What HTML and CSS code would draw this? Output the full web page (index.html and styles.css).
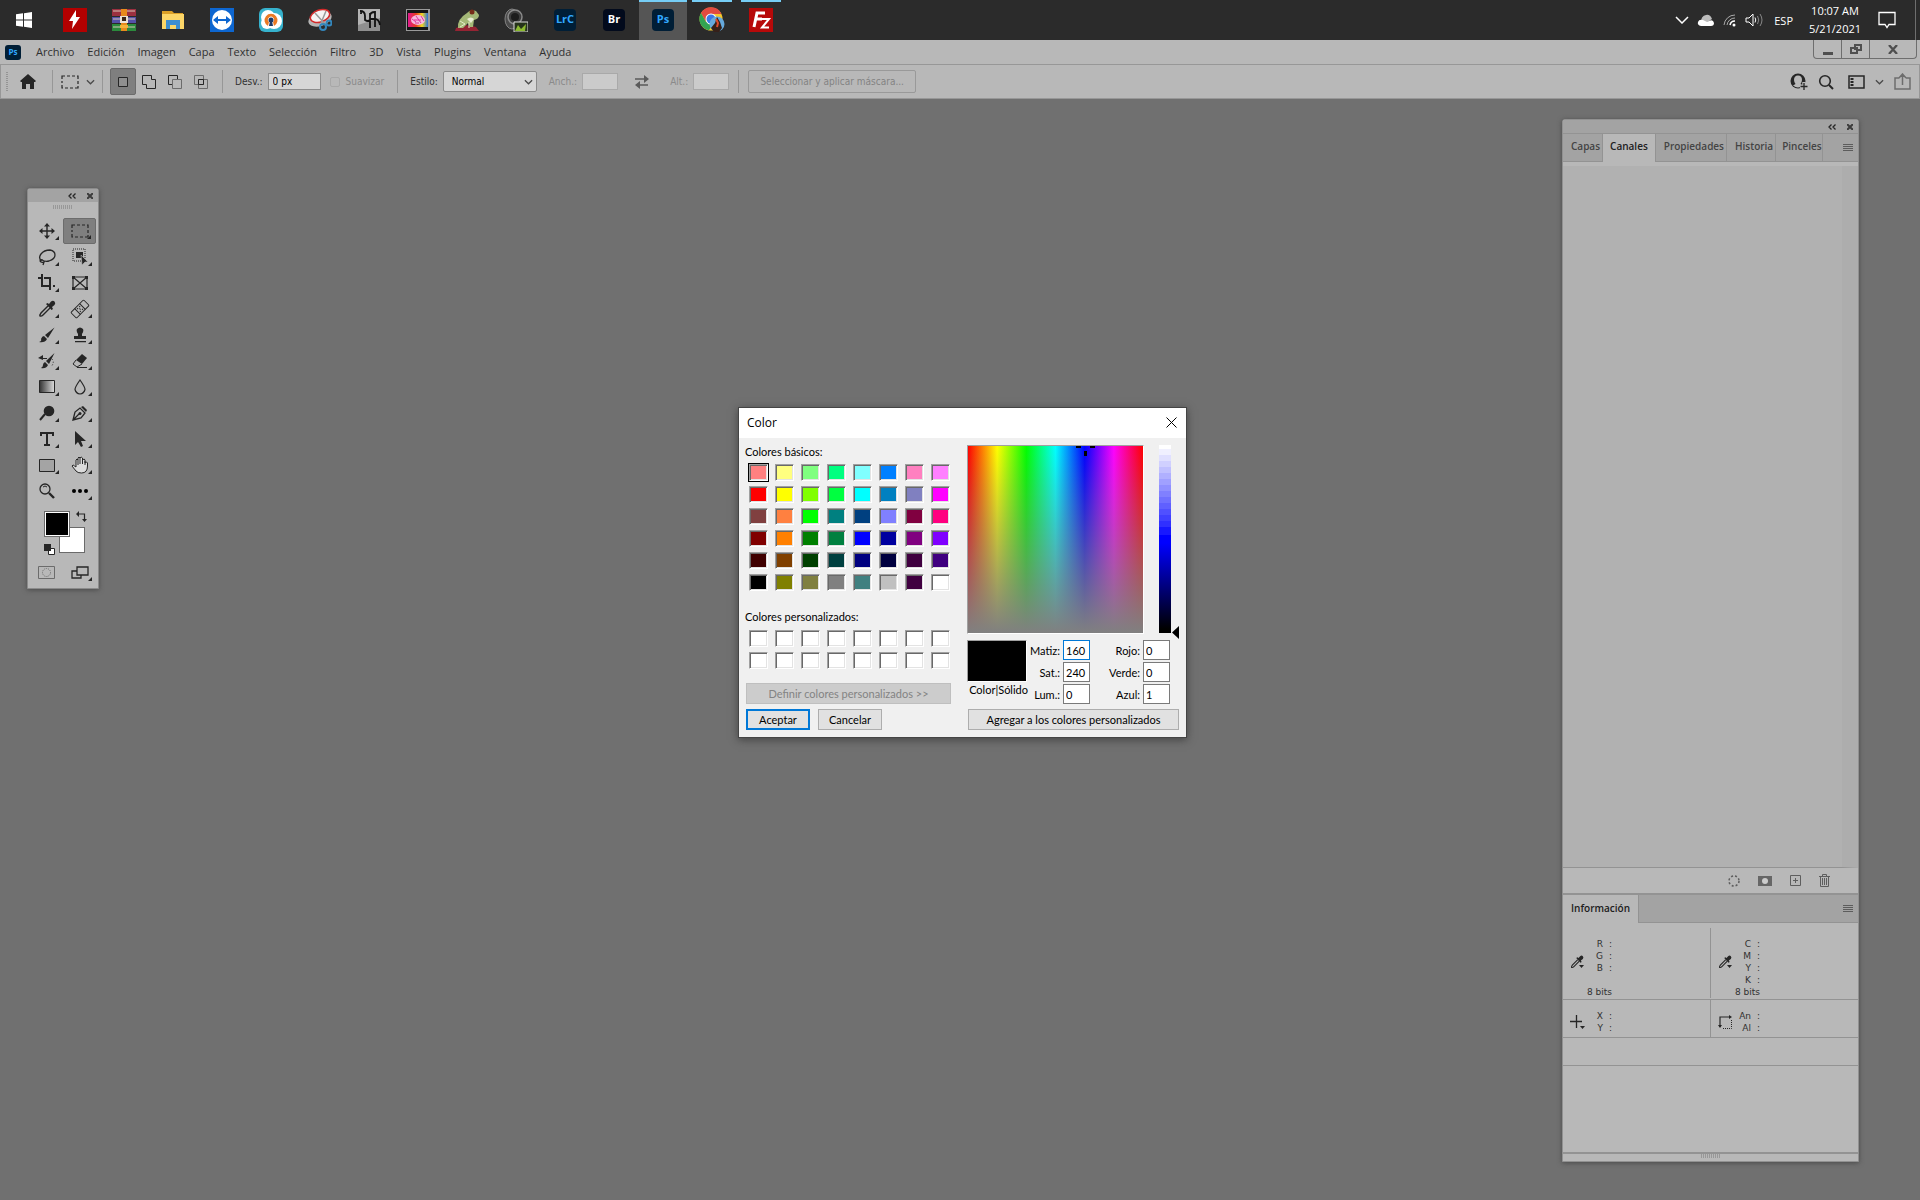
FILE: index.html
```html
<!DOCTYPE html>
<html lang="es">
<head>
    <meta charset="UTF-8">
    <title>Photoshop - Color</title>
    <link rel="stylesheet" href="styles.css">
</head>
<body>
<!-- shared symbols -->
<svg class="defs" aria-hidden="true">
    <symbol id="i-dropper" viewBox="0 0 18 18">
        <path d="M10 6 3 13q-1.500 2-1 3 1.500.5 3-1l7-7" fill="none" stroke="#262626" stroke-width="1.400"/>
        <path d="m8 4 1.500-1 1.500 1 2-2.500q2-1.500 3.500 0t0 3.500L14 7l1 2-1.500 1z" fill="#262626"/>
    </symbol>
    <symbol id="i-chevron" viewBox="0 0 10 6">
        <path d="m1 1 4 4 4-4" fill="none" stroke="#4a4a4a" stroke-width="1.400"/>
    </symbol>
    <symbol id="i-marquee" viewBox="0 0 18 14">
        <path d="M1 4V1h3M6 1h3m2 0h3m2 0h1v3M17 6v3m0 2v2h-3m-2 0H9m-2 0H4m-2 0H1v-3M1 8V6" fill="none" stroke="#262626" stroke-width="1.200"/>
    </symbol>
</svg>

<header class="taskbar">
    <button class="start" aria-label="Inicio">
        <svg width="16" height="16" viewBox="0 0 16 16"><path d="M0 2.300 7 1.300V7.500H0zM8 1.200 16 0v7.500H8zM0 8.500h7v6.200l-7-1zM8 8.500h8V16l-8-1.200z" fill="#fff"/></svg>
    </button>
    <button class="app" aria-label="Flash"><svg width="24" height="24" viewBox="0 0 24 24"><path d="M0 0h24v24H0z" fill="#b40000"/><path d="M13 2 6 13h4l-1 8 8-12h-4z" fill="#fff"/></svg></button>
    <button class="app" aria-label="WinRAR">
        <svg width="24" height="24" viewBox="0 0 24 24">
            <path d="M0 1h24v7H0z" fill="#9b3040"/><path d="M0 9h24v6H0z" fill="#5450a8"/><path d="M0 16h24v7H0z" fill="#2b8a3c"/>
            <path d="M1 3h22M1 11h22M1 19h22" stroke="#d8c8b8"/>
            <path d="M9 1h6v22H9z" fill="#e88a1c"/><path d="M8 8h8v7H8z" fill="#e9e2d5"/><path d="M10 9h4v4h-4z" fill="#3a2516"/><path d="M8 17h8v3H8z" fill="#f2b33b"/>
        </svg>
    </button>
    <button class="app" aria-label="Explorador">
        <svg width="24" height="24" viewBox="0 0 24 24"><path d="M1 3h10l2 2h9v5H1z" fill="#dba028"/><path d="M1 6h22v15H1z" fill="#fcd668"/><path d="M5 12h14v9h-4v-4H9v4H5z" fill="#3e8ed0"/></svg>
    </button>
    <button class="app" aria-label="TeamViewer">
        <svg width="24" height="24" viewBox="0 0 24 24"><path d="M0 0h24v24H0z" fill="#0d66d0"/><circle cx="12" cy="12" r="10" fill="#fff"/><path d="m3 12 5-4v3h8V8l5 4-5 4v-3H8v3z" fill="#0d66d0"/></svg>
    </button>
    <button class="app" aria-label="OpenVPN">
        <svg width="24" height="24" viewBox="0 0 24 24"><rect width="24" height="24" rx="6" fill="#36b2cd"/><circle cx="9" cy="9" r="7" fill="#fff"/><circle cx="15" cy="13" r="8" fill="#fff"/><circle cx="8" cy="15" r="6" fill="#fff"/><path d="M9 18a6.500 6.500 0 1 1 6 0l-1-4a3 3 0 1 0-4 0z" fill="#ea7a25"/><circle cx="12" cy="12" r="2.500" fill="#1e3a68"/><path d="M11 13h2l1 5h-4z" fill="#1e3a68"/></svg>
    </button>
    <button class="app" aria-label="Recortes">
        <svg width="24" height="24" viewBox="0 0 24 24"><ellipse cx="12" cy="11" rx="12" ry="7" transform="rotate(-18 12 11)" fill="#b5b5b5"/><ellipse cx="12" cy="8" rx="10" ry="6" transform="rotate(-18 12 8)" fill="#f6f2f2" stroke="#d22a2a" stroke-width="1.500"/><path d="m7 5 10 11M18 3l-5 12" stroke="#999" stroke-width="1.500"/><g fill="none" stroke="#3387bd" stroke-width="2"><circle cx="15" cy="19" r="3"/><circle cx="21" cy="15" r="2.500"/></g></svg>
    </button>
    <button class="app" aria-label="Editor">
        <svg width="24" height="24" viewBox="0 0 24 24"><path d="M1 1h22v22H1z" fill="#8f8f8f"/><path d="M1 1h22v9L1 17z" fill="#b4b4b4"/><path d="M3 3q5 0 5 5v4q3 2 5 0V5M13 20V8q0-4 5-4v15M13 11h5q4 0 5 6M4 3v3" fill="none" stroke="#111" stroke-width="1.800"/></svg>
    </button>
    <button class="app" aria-label="Irfan">
        <svg width="24" height="24" viewBox="0 0 24 24"><defs><linearGradient id="rainbow"><stop stop-color="#e01890"/><stop offset=".4" stop-color="#e83a20"/><stop offset=".7" stop-color="#f4d820"/><stop offset="1" stop-color="#2a70d8"/></linearGradient></defs><path d="M0 1h24v22H0z" fill="#9a9a9a"/><path d="M1 2h21v20H1z" fill="#151515"/><path d="M2 5h20v14H2z" fill="url(#rainbow)"/><ellipse cx="12" cy="12" rx="7" ry="5" fill="#f7b9dd"/><path d="m6 11 4 3m0-6 5 7m0-7 3 5m-10-1h7m-6 3h4" stroke="#e0359a"/></svg>
    </button>
    <button class="app" aria-label="Rana">
        <svg width="24" height="24" viewBox="0 0 24 24"><path d="M1 20q9-5 20-1l3 4H0z" fill="#952433"/><path d="M12 5q3-4 9-2l3 4q0 4-5 5l-1 7h-3l-2-4-5 5H3q-1-9 9-15z" fill="#a4b877"/><path d="M12 11q4-3 7 0l-3 4z" fill="#e8ecd2"/><circle cx="17" cy="4" r="2.500" fill="#762d19"/><path d="m5 13 5 3-5 3M14 14v6" stroke="#e4ecc8" fill="none"/></svg>
    </button>
    <button class="app" aria-label="Objetivo">
        <svg width="24" height="24" viewBox="0 0 24 24"><ellipse cx="8" cy="11" rx="7" ry="10" fill="#4b4b4b" stroke="#858585"/><circle cx="11" cy="9" r="7" fill="#3c3c3c" stroke="#8a8a8a" stroke-width="1.500"/><circle cx="11" cy="9" r="4" fill="#1c1c1c"/><path d="M10 14h14v10H10z" fill="#26331b" stroke="#ddd"/><path d="m11 23 3-6 3 4 5-5-1 7z" fill="#8dbb31"/></svg>
    </button>
    <button class="app" aria-label="Lightroom"><span class="adobe">LrC</span></button>
    <button class="app" aria-label="Bridge"><span class="adobe bridge">Br</span></button>
    <button class="app open current" aria-label="Photoshop"><span class="adobe">Ps</span></button>
    <button class="app open" aria-label="Chrome">
        <svg width="26" height="26" viewBox="0 0 26 26"><circle cx="12" cy="12" r="11.500" fill="#f5c62d"/><path d="M2 6a11.500 11.500 0 0 1 20.500 1H12l-5 8z" fill="#e14a40"/><path d="M2 6a11.500 11.500 0 0 0 8 17.300l5-8-8-.3z" fill="#32a352"/><circle cx="12" cy="12" r="5.500" fill="#fff"/><circle cx="12" cy="12" r="4.500" fill="#3b78e7"/><circle cx="18" cy="17" r="7.500" fill="#66a9dc"/><path d="m18 10 3 5 2 6-3 4h-5l-3-4 4-5z" fill="#352019"/><path d="m17 12 2 4-1 4" stroke="#dd4a2b" stroke-width="2" fill="none"/></svg>
    </button>
    <button class="app open" aria-label="FileZilla"><svg width="24" height="24" viewBox="0 0 24 24"><path d="M0 0h24v24H0z" fill="#b70909"/><path d="M5 19 8 5h8M6.500 11H13" stroke="#fff" stroke-width="3" fill="none"/><path d="M12 11h8l-7 8.500h7" stroke="#fff" stroke-width="2" fill="none"/></svg></button>

    <div class="tray">
        <svg width="14" height="8" viewBox="0 0 14 8"><path d="m1 1 6 6 6-6" fill="none" stroke="#fff" stroke-width="1.500"/></svg>
        <svg width="18" height="12" viewBox="0 0 18 12"><path d="M4 8q0-6 5-7 4-1 6 4l-6 4z" fill="#bbb"/><path d="M4 12q-4-1-3-4 1-3 5-2l4 2q6-4 7 1 0 3-3 3z" fill="#fff"/></svg>
        <svg width="14" height="14" viewBox="0 0 14 14"><g fill="none" stroke="#aaa"><path d="M1 12A11 11 0 0 1 12 2M4 12a8 8 0 0 1 8-7"/><path d="M7 12a5 5 0 0 1 5-4" stroke="#fff" stroke-width="1.500"/></g><circle cx="11" cy="12" r="1.500" fill="#fff"/></svg>
        <svg width="18" height="14" viewBox="0 0 18 14"><path d="M1 5h3l4-4v12L4 9H1z" fill="none" stroke="#fff"/><path d="M10 4.500q1.500 2.500 0 5" fill="none" stroke="#fff"/><path d="M12.500 3q2.500 4 0 8M15 1q4 6 0 12" fill="none" stroke="#888"/></svg>
        <span class="lang">ESP</span>
        <div class="clock"><span>10:07 AM</span><span>5/21/2021</span></div>
        <svg width="18" height="18" viewBox="0 0 18 18"><path d="M1 1.500h16v12h-6l-2 3-2-3H1z" fill="none" stroke="#fff" stroke-width="1.300"/></svg>
        <span class="show-desktop"></span>
    </div>
</header>

<nav class="menubar">
    <span class="ps-logo">Ps</span>
    <a href="#">Archivo</a>
    <a href="#">Edición</a>
    <a href="#">Imagen</a>
    <a href="#">Capa</a>
    <a href="#">Texto</a>
    <a href="#">Selección</a>
    <a href="#">Filtro</a>
    <a href="#">3D</a>
    <a href="#">Vista</a>
    <a href="#">Plugins</a>
    <a href="#">Ventana</a>
    <a href="#">Ayuda</a>
    <div class="window-buttons">
        <button aria-label="Minimizar"><svg width="10" height="11" viewBox="0 0 10 11"><path d="M0 8h10v3H0z" fill="#4f4f4f"/></svg></button>
        <button aria-label="Restaurar"><svg width="12" height="10" viewBox="0 0 12 10"><path d="M5 6V1h6v5H8M1 4h6v5H1z" fill="none" stroke="#4f4f4f" stroke-width="2"/></svg></button>
        <button class="close" aria-label="Cerrar"><svg width="10" height="9" viewBox="0 0 10 9"><path d="m1 0 8 9m0-9L1 9" stroke="#4f4f4f" stroke-width="2.300"/></svg></button>
    </div>
</nav>

<div class="options">
    <span class="grip"></span>
    <button class="home" aria-label="Inicio"><svg width="16" height="15" viewBox="0 0 16 15"><path d="m8 0 8 7-1 1h-1v7h-4v-5H6v5H2V8H1L0 7z" fill="#262626"/></svg></button>
    <span class="sep"></span>
    <button class="preset" aria-label="Marco rectangular"><svg width="18" height="14"><use href="#i-marquee"/></svg><svg width="9" height="6"><use href="#i-chevron"/></svg></button>
    <span class="sep"></span>
    <div class="modes">
        <button class="on" aria-label="Nueva"><svg width="10" height="10" viewBox="0 0 10 10"><path d="M.5.500h9v9h-9z" fill="#8f8f8f" stroke="#262626"/></svg></button>
        <button aria-label="Añadir"><svg width="14" height="14" viewBox="0 0 14 14"><path d="M.5.500h9v4h4v9h-9v-4h-4z" fill="none" stroke="#262626"/></svg></button>
        <button aria-label="Restar"><svg width="14" height="14" viewBox="0 0 14 14"><path d="M4.500 9.500h-4v-9h9v4" fill="none" stroke="#262626"/><path d="M4.500 4.500h9v9h-9z" fill="none" stroke="#6b6b6b"/></svg></button>
        <button aria-label="Intersecar"><svg width="14" height="14" viewBox="0 0 14 14"><path d="M.5.500h9v9h-9zM4.500 4.500h9v9h-9z" fill="none" stroke="#6b6b6b"/><path d="M4.500 4.500h5v5h-5z" fill="none" stroke="#262626"/></svg></button>
    </div>
    <span class="sep"></span>
    <label for="desv">Desv.:</label>
    <input type="text" id="desv" value="0 px">
    <label class="smooth off"><input type="checkbox" disabled>Suavizar</label>
    <span class="sep"></span>
    <label for="estilo">Estilo:</label>
    <div class="select-wrap">
        <select id="estilo"><option>Normal</option></select>
        <svg width="9" height="6"><use href="#i-chevron"/></svg>
    </div>
    <label class="off" for="ancho">Anch.:</label>
    <input type="text" id="ancho" class="short" disabled>
    <svg class="swap" width="16" height="14" viewBox="0 0 16 14"><path d="M1 4h10M5 10h9" stroke="#5a5a5a" stroke-width="1.500"/><path d="m10 0 5 4-5 4zM6 6l-5 4 5 4z" fill="#5a5a5a"/></svg>
    <label class="off" for="alto">Alt.:</label>
    <input type="text" id="alto" class="short" disabled>
    <span class="sep"></span>
    <button class="mask" disabled>Seleccionar y aplicar máscara...</button>
    <div class="options-right">
        <svg width="18" height="18" viewBox="0 0 18 18"><circle cx="8" cy="8" r="7.500" fill="#262626"/><path d="M8 2.500q4 0 4 4.500 0 2-1.500 4l2.500 1.500q-5 4-10 0L5.500 11Q4 9 4 7q0-4.500 4-4.500z" fill="#b8b8b8"/><path d="M14 9v8m-4-3.500h8" stroke="#b8b8b8" stroke-width="3.500"/><path d="M14 10v7m-3.500-3.500h7" stroke="#262626" stroke-width="1.300"/></svg>
        <svg width="16" height="16" viewBox="0 0 16 16"><circle cx="7" cy="7" r="5.300" fill="none" stroke="#262626" stroke-width="1.600"/><path d="m11 11 4 4" stroke="#262626" stroke-width="2"/></svg>
        <svg class="wide" width="17" height="14" viewBox="0 0 17 14"><path d="M1 1h15v12H1z" fill="none" stroke="#262626" stroke-width="1.500"/><path d="M4 3v8" stroke="#262626" stroke-width="3" stroke-dasharray="2 1"/></svg>
        <svg width="9" height="6"><use href="#i-chevron"/></svg>
        <svg width="18" height="17" viewBox="0 0 18 17"><path d="M5 5H1v11h15V5h-4M8.500 12V2M5 5l3.500-4L12 5" fill="none" stroke="#6d6d6d" stroke-width="1.500"/></svg>
    </div>
</div>

<main class="workspace">
    <section class="tools">
        <div class="panel-head">
            <svg width="8" height="6" viewBox="0 0 8 6"><path d="M3.500.5 1 3l2.500 2.500M7.500.5 5 3l2.500 2.500" fill="none" stroke="#262626" stroke-width="1.300"/></svg>
            <svg width="6" height="6" viewBox="0 0 6 6"><path d="m0 0 6 6m0-6L0 6" stroke="#3c3c3c" stroke-width="2"/></svg>
        </div>
        <div class="grip-h"></div>
        <div class="tool-grid">
            <button class="more" aria-label="Mover"><svg width="16" height="16" viewBox="0 0 16 16"><path d="M8 2v12M2 8h12" stroke="#262626" stroke-width="1.400"/><path d="m8 0 3 3.500H5zM8 16l3-3.500H5zM0 8l3.500-3v6zM16 8l-3.500-3v6z" fill="#262626"/></svg></button>
            <button class="more on" aria-label="Marco"><svg width="18" height="14"><use href="#i-marquee"/></svg></button>
            <button class="more" aria-label="Lazo"><svg width="18" height="18" viewBox="0 0 18 18"><path d="M3.500 13Q0 10 3 6t9-4q5 1 5 5t-6 6q-4 1-7-1M5 12q-3-1-3 1 1 2 4 1l-1 3" fill="none" stroke="#262626" stroke-width="1.300"/></svg></button>
            <button class="more" aria-label="Selección de objetos"><svg width="18" height="18" viewBox="0 0 18 18"><path d="M2 1h12v12H2z" fill="none" stroke="#262626" stroke-dasharray="1 1"/><path d="M5 4h7v6H5z" fill="#262626"/><path d="m10 7 7 7h-3l-3 3z" fill="#262626" stroke="#b8b8b8" stroke-width=".6"/></svg></button>
            <button class="more" aria-label="Recortar"><svg width="18" height="18" viewBox="0 0 18 18"><path d="M0 4h3M4 0v12h9M6 4h6v12M15 12h2" fill="none" stroke="#262626" stroke-width="2"/></svg></button>
            <button aria-label="Marco de imagen"><svg width="18" height="16" viewBox="0 0 18 16"><path d="M2 2h14v12H2zl14 12m0-12L2 14" fill="none" stroke="#262626" stroke-width="1.200"/><path d="M1 1h3v3H1zM14 1h3v3h-3zM1 12h3v3H1zM14 12h3v3h-3z" fill="#262626"/></svg></button>
            <button class="more" aria-label="Cuentagotas"><svg width="18" height="18"><use href="#i-dropper"/></svg></button>
            <button class="more" aria-label="Pincel corrector"><svg width="20" height="20" viewBox="0 0 20 20"><g transform="rotate(-45 10 10)" fill="none" stroke="#262626"><rect x="1" y="6" width="18" height="8" rx="1"/><path d="M6.500 6v8M13.500 6v8"/><path d="M8 8h1m2 0h1M8 12h1m2 0h1m-2.500-2h1" stroke-width="1.500"/></g></svg></button>
            <button class="more" aria-label="Pincel"><svg width="16" height="16" viewBox="0 0 16 16"><path d="M15.500.500 9 11 6 8zM5 9l3 3q-2 4-8 3 3-1 2-3 1-3 3-3z" fill="#262626"/></svg></button>
            <button class="more" aria-label="Tampón"><svg width="16" height="16" viewBox="0 0 16 16"><path d="M6 7Q4 4 5 2q3-3 6 0 1 2-1 5v2h4v3H2V9h4zM3 14h11v1.300H3z" fill="#262626"/></svg></button>
            <button class="more" aria-label="Pincel de historia"><svg width="18" height="16" viewBox="0 0 18 16"><path d="M16.500 0 11 11 8 8zM7 9l3 3q-2 4-7 3 2-1 2-3 0-2 2-3zM0 5l5-3v3h4v1H5v1z" fill="#262626"/><path d="M14 6q3 3-1 8" fill="none" stroke="#262626" stroke-dasharray="1 2"/></svg></button>
            <button class="more" aria-label="Borrador"><svg width="16" height="16" viewBox="0 0 16 16"><path d="m10 1 5 4-5 6-6-4z" fill="#262626"/><path d="m4 7-3 4 4 3 5-3M5 14.500h10" fill="none" stroke="#262626"/></svg></button>
            <button class="more" aria-label="Degradado"><svg width="16" height="14" viewBox="0 0 16 14"><defs><linearGradient id="deg"><stop stop-color="#333"/><stop offset="1" stop-color="#ddd"/></linearGradient></defs><path d="M.5.500h15v12H.5z" fill="url(#deg)" stroke="#262626"/></svg></button>
            <button class="more" aria-label="Desenfocar"><svg width="12" height="16" viewBox="0 0 12 16"><path d="M6 1Q1 8 1 10.500q1 4 5 4.500 4-.5 5-4.500Q11 8 6 1z" fill="none" stroke="#262626" stroke-width="1.200"/></svg></button>
            <button class="more" aria-label="Sobreexponer"><svg width="16" height="16" viewBox="0 0 16 16"><circle cx="10" cy="6" r="5.300" fill="#262626"/><path d="m6 9-5 6" stroke="#262626" stroke-width="2"/></svg></button>
            <button class="more" aria-label="Pluma"><svg width="16" height="16" viewBox="0 0 16 16"><path d="m1 15 2-8 5-4 5 5-4 5zl6-6" fill="none" stroke="#262626" stroke-width="1.300"/><circle cx="8" cy="8.500" r="1.500" fill="#262626"/><path d="m9 2 2-1 4 4-1 2z" fill="#262626"/></svg></button>
            <button class="more" aria-label="Texto"><svg width="14" height="14" viewBox="0 0 14 14"><path d="M1 4V1h12v3M7 1v12M4 13h6" fill="none" stroke="#262626" stroke-width="2"/></svg></button>
            <button class="more" aria-label="Selección de trazado"><svg width="12" height="16" viewBox="0 0 12 16"><path d="M1 0v14l3-3 3 5 2-1-2-5h5z" fill="#262626"/></svg></button>
            <button class="more" aria-label="Rectángulo"><svg width="16" height="13" viewBox="0 0 16 13"><path d="M.5.500h15v12H.5z" fill="#a4a4a4" stroke="#262626"/></svg></button>
            <button class="more" aria-label="Mano"><svg width="18" height="18" viewBox="0 0 18 18"><path d="M5 11V4q1-2 2 0V2q1-2 2 0 1-2 2.500 0v2q2-2 2.500 0v3q2-2 2.500 0v3q0 7-6 7-4 0-5.500-2L1 10q1-2 2.500 0zM7 4v5M9 2v6m2.500-6v6M14 5v4" fill="#dcdcdc" stroke="#262626"/></svg></button>
            <button aria-label="Zoom"><svg width="16" height="16" viewBox="0 0 16 16"><circle cx="6" cy="6" r="5" fill="none" stroke="#262626" stroke-width="1.300"/><path d="M4 4q2-2 4 0" fill="none" stroke="#262626"/><path d="m10 10 5 5" stroke="#262626" stroke-width="2.400"/></svg></button>
            <button class="more" aria-label="Más"><svg width="16" height="4" viewBox="0 0 16 4"><circle cx="2" cy="2" r="2"/><circle cx="8" cy="2" r="2"/><circle cx="14" cy="2" r="2"/></svg></button>
        </div>
        <div class="colors">
            <button class="back" aria-label="Color de fondo"></button>
            <button class="front" aria-label="Color frontal"></button>
            <svg class="exchange" width="11" height="11" viewBox="0 0 11 11"><path d="M2 3h6.500v6" fill="none" stroke="#262626" stroke-width="1.200"/><path d="M0 3l3-3v6zM8.500 11l-2.500-3h5z" fill="#262626"/></svg>
            <svg class="reset" width="11" height="11" viewBox="0 0 11 11"><path d="M4.500 4.500h6v6h-6z" fill="#fff" stroke="#262626"/><path d="M0 0h7v7H0z" fill="#262626"/></svg>
        </div>
        <div class="tool-grid bottom">
            <button aria-label="Máscara rápida"><svg width="17" height="13" viewBox="0 0 17 13"><path d="M.5.500h16v12H.5z" fill="none" stroke="#6b6b6b"/><circle cx="8.500" cy="6.500" r="4" fill="none" stroke="#6b6b6b" stroke-dasharray="1 1"/></svg></button>
            <button class="more" aria-label="Modo de pantalla"><svg width="18" height="13" viewBox="0 0 18 13"><path d="M1 5h9v7H1z" fill="none" stroke="#262626" stroke-width="1.300"/><path d="M6 1h11v8H6z" fill="#b8b8b8" stroke="#262626" stroke-width="1.300"/></svg></button>
        </div>
    </section>

    <aside class="panels">
        <div class="panel-head">
            <svg width="8" height="6" viewBox="0 0 8 6"><path d="M3.500.5 1 3l2.500 2.500M7.500.5 5 3l2.500 2.500" fill="none" stroke="#262626" stroke-width="1.300"/></svg>
            <svg width="6" height="6" viewBox="0 0 6 6"><path d="m0 0 6 6m0-6L0 6" stroke="#3c3c3c" stroke-width="2"/></svg>
        </div>
        <div class="tabs">
            <button>Capas</button>
            <button class="on">Canales</button>
            <button>Propiedades</button>
            <button>Historia</button>
            <button class="last">Pinceles</button>
            <span class="burger"></span>
        </div>
        <div class="channels"></div>
        <div class="panel-foot">
            <svg width="12" height="12" viewBox="0 0 12 12"><circle cx="6" cy="6" r="5" fill="none" stroke="#5e5e5e" stroke-width="1.500" stroke-dasharray="2 2"/></svg>
            <svg width="14" height="10" viewBox="0 0 14 10"><path d="M0 0h14v10H0z" fill="#666"/><circle cx="7" cy="5" r="3" fill="#ccc"/></svg>
            <svg width="11" height="11" viewBox="0 0 11 11"><path d="M.5.500h10v10H.5zM5.500 3v5M3 5.500h5" fill="none" stroke="#5e5e5e"/></svg>
            <svg width="11" height="13" viewBox="0 0 11 13"><path d="M0 2.500h11M3.500 2V.5h4V2M1.500 3v9.500h8V3M3.500 4v7m2-7v7m2-7v7" fill="none" stroke="#5e5e5e"/></svg>
        </div>
        <div class="tabs info-tabs">
            <button class="on">Información</button>
            <span class="burger"></span>
        </div>
        <div class="info tall">
            <div class="cell">
                <svg width="15" height="14" viewBox="0 0 15 14"><use href="#i-dropper" width="14" height="14"/><path d="M9 10h5l-2.500 3z" fill="#262626"/></svg>
                <dl><dt>R</dt><dd>:</dd><dt>G</dt><dd>:</dd><dt>B</dt><dd>:</dd></dl>
                <span class="bits">8 bits</span>
            </div>
            <div class="cell">
                <svg width="15" height="14" viewBox="0 0 15 14"><use href="#i-dropper" width="14" height="14"/><path d="M9 10h5l-2.500 3z" fill="#262626"/></svg>
                <dl><dt>C</dt><dd>:</dd><dt>M</dt><dd>:</dd><dt>Y</dt><dd>:</dd><dt>K</dt><dd>:</dd></dl>
                <span class="bits">8 bits</span>
            </div>
        </div>
        <div class="info">
            <div class="cell">
                <svg width="15" height="14" viewBox="0 0 15 14"><path d="M0 6.500h12M6.500 0v13" stroke="#262626" stroke-width="1.300"/><path d="M10 11h5l-2.500 3z" fill="#262626"/></svg>
                <dl><dt>X</dt><dd>:</dd><dt>Y</dt><dd>:</dd></dl>
            </div>
            <div class="cell">
                <svg width="15" height="14" viewBox="0 0 15 14"><path d="M2 12V2h10" fill="none" stroke="#262626" stroke-width="1.200"/><path d="m11 0 3 2-3 2zM0 10l2 3 2-3z" fill="#262626"/><path d="M13.500 5v8.500H4" fill="none" stroke="#262626" stroke-dasharray="1 1"/></svg>
                <dl><dt>An</dt><dd>:</dd><dt>Al</dt><dd>:</dd></dl>
            </div>
        </div>
        <div class="info-strip"></div>
        <div class="info-rest"></div>
        <div class="panel-end"><span class="grip-h"></span></div>
    </aside>

    <form class="dialog" onsubmit="event.preventDefault()">
        <div class="title">
            <h1>Color</h1>
            <button type="button" aria-label="Cerrar"><svg width="11" height="11" viewBox="0 0 11 11"><path d="m.5.500 10 10m0-10-10 10" stroke="#000"/></svg></button>
        </div>
        <div class="dialog-body">
            <div class="left">
                <p>Colores básicos:</p>
                <div class="swatches" id="basic"></div>
                <p class="custom-label">Colores personalizados:</p>
                <div class="swatches" id="custom"></div>
                <button type="button" class="define" disabled>Definir colores personalizados &gt;&gt;</button>
                <div class="buttons">
                    <button type="submit" class="ok">Aceptar</button>
                    <button type="button">Cancelar</button>
                </div>
            </div>
            <div class="right">
                <div class="pickers">
                    <div class="spectrum"><svg class="cross" width="19" height="10" viewBox="0 0 19 10"><path d="M0 0h5v2H0zM14 0h5v2h-5zM8 5h3v5H8z"/></svg></div>
                    <input type="range" class="lum" min="0" max="240" value="0" aria-label="Luminosidad">
                </div>
                <div class="values">
                    <div class="preview">
                        <div class="solid"></div>
                        <span>Color|Sólido</span>
                    </div>
                    <div class="fields">
                        <label for="hue">Matiz:</label><input type="text" id="hue" class="focus" value="160">
                        <label for="red">Rojo:</label><input type="text" id="red" value="0">
                        <label for="sat">Sat.:</label><input type="text" id="sat" value="240">
                        <label for="green">Verde:</label><input type="text" id="green" value="0">
                        <label for="lum">Lum.:</label><input type="text" id="lum" value="0">
                        <label for="blue">Azul:</label><input type="text" id="blue" value="1">
                    </div>
                </div>
                <button type="button" class="add">Agregar a los colores personalizados</button>
            </div>
        </div>
    </form>
</main>

<script>
    const basic = [
        "ff8080", "ffff80", "80ff80", "00ff80", "80ffff", "0080ff", "ff80c0", "ff80ff",
        "ff0000", "ffff00", "80ff00", "00ff40", "00ffff", "0080c0", "8080c0", "ff00ff",
        "804040", "ff8040", "00ff00", "008080", "004080", "8080ff", "800040", "ff0080",
        "800000", "ff8000", "008000", "008040", "0000ff", "0000a0", "800080", "8000ff",
        "400000", "804000", "004000", "004040", "000080", "000040", "400040", "400080",
        "000000", "808000", "808040", "808080", "408080", "c0c0c0", "400040", "ffffff"
    ];

    function addSwatches(id, colors) {
        const box = document.getElementById(id);
        colors.forEach(function (color) {
            const b = document.createElement("button");
            b.type = "button";
            b.style.backgroundColor = "#" + color;
            b.setAttribute("aria-label", "#" + color);
            box.appendChild(b);
        });
    }

    addSwatches("basic", basic);
    addSwatches("custom", new Array(16).fill("ffffff"));
    document.querySelector("#basic button").classList.add("selected");
</script>
</body>
</html>
```
FILE: styles.css
```css
* {
    box-sizing: border-box;
}

body {
    margin: 0;
    min-height: 100vh;
    display: flex;
    flex-direction: column;
    font-family: "Open Sans", "Noto Sans", sans-serif;
    font-size: 11px;
    color: #303030;
    background-color: #707070;
}

button {
    font: inherit;
    color: inherit;
    padding: 0;
    border: none;
    background: none;
}

svg {
    display: block;
    flex: none;
}

.defs {
    position: absolute;
    width: 0;
    height: 0;
}

/* taskbar */
.taskbar {
    display: flex;
    gap: 1px;
    height: 40px;
    background-color: #2b2b2b;
}

.start {
    width: 50px;
    padding-left: 16px;
}

.app {
    width: 48px;
    display: flex;
    align-items: center;
    justify-content: center;
    background: no-repeat center top / 40px 2px;
}

.app.open {
    background-image: linear-gradient(#76cdf5, #76cdf5);
}

.app.current {
    background-color: #555;
    background-size: 48px 2px;
}

.adobe {
    width: 22px;
    height: 22px;
    border-radius: 4px;
    background-color: #001e36;
    color: #31a8ff;
    font-size: 11px;
    font-weight: bold;
    line-height: 20px;
    text-align: center;
}

.adobe.bridge {
    background-color: #020a1c;
    color: #fff;
}

.tray {
    margin-left: auto;
    display: flex;
    align-items: center;
    gap: 8px;
    padding-right: 4px;
    color: #fff;
}

.lang {
    margin: 0 6px 0 3px;
}

.clock {
    width: 56px;
    margin-right: 7px;
    display: flex;
    flex-direction: column;
    line-height: 18px;
    text-align: center;
    white-space: nowrap;
}

.show-desktop {
    width: 1px;
    height: 40px;
    margin-left: 11px;
    background-color: #6e6e6e;
}

/* menu bar */
.menubar {
    display: flex;
    align-items: center;
    gap: 13px;
    height: 25px;
    padding-left: 5px;
    background-color: #b8b8b8;
    border-bottom: 1px solid #979797;
    line-height: 14px;
}

.menubar a {
    padding-bottom: 1px;
    color: #303030;
    text-decoration: none;
}

.ps-logo {
    width: 16px;
    height: 15px;
    margin-right: 2px;
    border-radius: 3px;
    background-color: #001e36;
    color: #31a8ff;
    font-size: 8px;
    font-weight: bold;
    text-align: center;
}

.window-buttons {
    display: flex;
    align-self: flex-start;
    margin-left: auto;
    margin-right: 3px;
    height: 19px;
    border: 1px solid #6e6e6e;
    border-top: none;
    border-radius: 0 0 4px 4px;
}

.window-buttons button {
    width: 28px;
    display: flex;
    align-items: center;
    justify-content: center;
    border-right: 1px solid #6e6e6e;
}

.window-buttons .close {
    width: 46px;
    border-right: none;
}

/* tool options */
.options {
    display: flex;
    align-items: center;
    height: 34px;
    padding-left: 5px;
    background-color: #b8b8b8;
    border: 1px solid #979797;
    border-top: none;
    font-family: "DejaVu Sans Condensed", "Noto Sans", sans-serif;
    font-size: 10px;
}

.options .grip {
    width: 2px;
    height: 20px;
    background: repeating-linear-gradient(#949494 0 1px, #b8b8b8 1px 2px);
}

.options .sep {
    width: 1px;
    height: 23px;
    background-color: #979797;
}

.home {
    margin: 0 16px 0 12px;
}

.preset {
    display: flex;
    align-items: center;
    gap: 7px;
    margin: 0 7px 0 8px;
}

.modes {
    display: flex;
    margin: 0 8px 0 7px;
}

.modes button {
    width: 26px;
    height: 27px;
    display: flex;
    align-items: center;
    justify-content: center;
    border-radius: 2px;
}

.modes .on {
    background-color: #7f7f7f;
    border: 1px solid #6c6c6c;
}

.options label {
    margin: 0 5px 0 12px;
}

.options .off {
    color: #8a8a8a;
}

.options input[type="text"] {
    width: 53px;
    height: 17px;
    padding: 0 4px;
    border: 1px solid #8c8c8c;
    background-color: #d6d6d6;
    font: inherit;
    color: #000;
}

.options input.short {
    width: 36px;
    border-color: #a9a9a9;
    background-color: #cbcbcb;
}

.options .smooth {
    display: flex;
    align-items: center;
    gap: 6px;
    margin: 0 13px 0 9px;
}

.smooth input {
    appearance: none;
    width: 10px;
    height: 10px;
    margin: 0;
    border: 1px solid #a8a8a8;
    border-radius: 2px;
}

.select-wrap {
    display: flex;
    align-items: center;
}

.select-wrap select {
    appearance: none;
    width: 94px;
    height: 21px;
    margin-right: -13px;
    padding: 0 8px;
    border: 1px solid #8c8c8c;
    border-radius: 2px;
    background-color: #d6d6d6;
    font: inherit;
    color: #000;
}

.select-wrap svg {
    margin-right: 4px;
    z-index: 1;
}

.swap {
    margin: 0 8px 0 16px;
}

.options .short + .sep {
    margin: 0 9px;
}

.mask {
    width: 168px;
    height: 23px;
    border: 1px solid #999;
    border-radius: 2px;
    color: #838383;
}

.options-right {
    display: flex;
    align-items: center;
    gap: 10px;
    margin-left: auto;
    padding-right: 7px;
}

.options-right .wide {
    margin-left: 4px;
}

/* workspace and its floating windows */
.workspace {
    flex: 1;
    position: relative;
    background-color: #707070;
}

.panel-head {
    display: flex;
    align-items: center;
    justify-content: flex-end;
    gap: 11px;
    height: 13px;
    padding-right: 5px;
    background-color: #a3a3a3;
}

.grip-h {
    display: block;
    width: 20px;
    height: 4px;
    background: repeating-linear-gradient(90deg, #989898 0 1px, #b8b8b8 1px 2px);
}

.tools {
    position: absolute;
    left: 27px;
    top: 89px;
    width: 72px;
    background-color: #b8b8b8;
    border: 1px solid #8b8b8b;
    border-radius: 3px 3px 0 0;
    box-shadow: 0 1px 5px #4a4a4a;
}

.tools > .grip-h {
    margin: 3px auto 9px;
}

.tool-grid {
    display: grid;
    grid-template-columns: 33px 33px;
    grid-auto-rows: 26px;
    padding-left: 2px;
}

.tool-grid button {
    position: relative;
    display: flex;
    align-items: center;
    justify-content: center;
    border-radius: 2px;
}

.tool-grid .on {
    background-color: #7f7f7f;
    border: 1px solid #6c6c6c;
}

.tool-grid .more::after {
    content: "";
    position: absolute;
    right: 4px;
    bottom: 4px;
    border: 2px solid #262626;
    border-top-color: transparent;
    border-left-color: transparent;
}

.colors {
    position: relative;
    width: 46px;
    height: 46px;
    margin: 6px 0 3px 14px;
}

.colors button {
    position: absolute;
    width: 26px;
    height: 26px;
    border: 1px solid #6b6b6b;
}

.colors .front {
    left: 2px;
    top: 1px;
    background-color: #000;
    box-shadow: inset 0 0 0 1px #fff;
}

.colors .back {
    left: 17px;
    top: 17px;
    background-color: #fff;
}

.colors .exchange {
    position: absolute;
    left: 34px;
    top: 1px;
}

.colors .reset {
    position: absolute;
    left: 2px;
    top: 34px;
}

.tool-grid.bottom {
    padding-bottom: 3px;
}

.panels {
    position: absolute;
    right: 61px;
    top: 20px;
    bottom: 38px;
    width: 297px;
    display: flex;
    flex-direction: column;
    background-color: #b8b8b8;
    border: 1px solid #919191;
    border-radius: 3px 3px 0 0;
    box-shadow: 0 1px 5px #4a4a4a;
}

.tabs {
    display: flex;
    height: 29px;
    background-color: #a3a3a3;
    border-top: 1px solid #939393;
    font-size: 10px;
    font-weight: 600;
    color: #444;
}

.tabs button {
    padding: 0 2px 4px 8px;
    border-right: 1px solid #939393;
    border-bottom: 1px solid #939393;
    white-space: nowrap;
}

.tabs .on {
    padding: 0 7px 4px;
    border-bottom: none;
    background-color: #b8b8b8;
    color: #202020;
}

.tabs .last {
    padding: 0 0 4px 6px;
}

.burger {
    flex: 1;
    border-bottom: 1px solid #939393;
    background: repeating-linear-gradient(#5c5c5c 0 1px, #a3a3a3 1px 2px) no-repeat right 5px top 10px / 10px 7px;
}

.channels {
    flex: 1;
    margin-top: 4px;
    background-color: #b1b1b1;
    border-right: 16px solid #adadad;
    border-bottom: 1px solid #939393;
}

.panel-foot {
    display: flex;
    align-items: center;
    justify-content: flex-end;
    gap: 18px;
    height: 25px;
    padding-right: 28px;
}

.info-tabs {
    height: 30px;
    border-top: 2px solid #939393;
}

.info-tabs .on {
    padding: 0 8px 2px;
}

.info {
    display: grid;
    grid-template-columns: 147px 1fr;
    border-bottom: 1px solid #939393;
    font-family: "DejaVu Sans", sans-serif;
    font-size: 9px;
    line-height: 12px;
}

.info .cell {
    display: grid;
    grid-template-columns: 15px 1fr;
    align-content: start;
    align-items: center;
    gap: 0 4px;
    height: 37px;
    padding: 10px 0 0 7px;
}

.info .cell + .cell {
    border-left: 1px solid #939393;
}

.info.tall {
    padding: 5px 0 1px;
}

.info.tall .cell {
    grid-template-rows: 48px 12px;
    height: 70px;
}

.info.tall .cell:first-child dl {
    align-self: start;
}

.info dl {
    display: grid;
    grid-template-columns: 14px 4px;
    column-gap: 5px;
    margin: 0;
    text-align: right;
}

.info dd {
    margin: 0;
}

.bits {
    grid-column: 1 / 3;
    padding-left: 17px;
}

.info-strip {
    height: 28px;
    border-bottom: 1px solid #939393;
}

.info-rest {
    height: 88px;
    border-bottom: 2px solid #939393;
}

.panel-end {
    display: flex;
    justify-content: center;
    height: 7px;
}

/* colour dialog */
.dialog {
    position: absolute;
    left: 738px;
    top: 308px;
    width: 449px;
    background-color: #f0f0f0;
    border: 1px solid #444;
    box-shadow: 0 2px 8px #444;
    font-family: Lato, "Open Sans", sans-serif;
    font-size: 11px;
    color: #000;
}

.title {
    display: flex;
    align-items: center;
    justify-content: space-between;
    height: 30px;
    padding: 0 9px 2px 8px;
    background-color: #fff;
}

.title h1 {
    margin: 0;
    font-family: "Open Sans", sans-serif;
    font-size: 12px;
    font-weight: normal;
}

.dialog-body {
    display: flex;
    gap: 16px;
    padding: 7px 7px 7px 6px;
}

.dialog p {
    margin: 0 0 6px;
    line-height: 13px;
}

.left {
    width: 206px;
}

.dialog p.custom-label {
    margin: 19px 0 7px;
}

.swatches {
    display: grid;
    grid-template-columns: repeat(8, 19px);
    grid-auto-rows: 17px;
    gap: 5px 7px;
    padding-left: 4px;
}

.swatches button {
    border: 1px solid;
    border-color: #a0a0a0 #fff #fff #a0a0a0;
    box-shadow: inset 1px 1px #696969, inset -1px -1px #e3e3e3;
}

.swatches .selected {
    outline: 1px solid #000;
}

.dialog .define,
.dialog .buttons button,
.dialog .add {
    height: 21px;
    border: 1px solid #adadad;
    background-color: #e1e1e1;
}

.dialog .define {
    width: 205px;
    margin: 14px 0 5px 1px;
    border-color: #bfbfbf;
    background-color: #ccc;
    color: #838383;
}

.buttons {
    display: flex;
    gap: 8px;
    padding-left: 1px;
}

.buttons button {
    width: 64px;
}

.dialog .buttons .ok {
    border: 2px solid #0078d7;
}

.right {
    flex: 1;
    display: flex;
    flex-direction: column;
}

.pickers {
    display: flex;
    gap: 15px;
    height: 189px;
    margin-bottom: 6px;
}

.spectrum {
    position: relative;
    width: 177px;
    border: 1px solid;
    border-color: #a0a0a0 #fff #fff #a0a0a0;
    background:
        linear-gradient(transparent, #808080),
        linear-gradient(90deg, #f00, #ff0, #0f0, #0ff, #00f, #f0f, #f00);
}

.cross {
    position: absolute;
    left: 108px;
    top: 0;
}

/* the track is only the left 12px, the arrow runs beside it */
.lum {
    appearance: none;
    writing-mode: vertical-lr;
    direction: rtl;
    width: 20px;
    height: 200px;
    margin: -6px 0;
    background: linear-gradient(#fff 0 4px, #f0f0ff 0 10px, #e0e0ff 0 16px, #d0d0ff 0 22px, #c0c0ff 0 28px, #b0b0ff 0 34px, #a0a0ff 0 40px, #9090ff 0 46px, #8080ff 0 52px, #7070ff 0 58px, #6060ff 0 64px, #5050ff 0 70px, #4040ff 0 76px, #3030ff 0 82px, #1818ff 0 90px, #00f 0 98px, #000 184px) no-repeat 0 6px / 12px 188px;
}

.lum::-webkit-slider-thumb {
    appearance: none;
    width: 7px;
    height: 13px;
    margin-left: 13px;
    background-color: #000;
    clip-path: polygon(100% 0, 100% 100%, 0 50%);
}

.values {
    display: flex;
    margin-bottom: 5px;
}

.preview {
    width: 61px;
    text-align: right;
    white-space: nowrap;
}

.solid {
    width: 60px;
    height: 42px;
    margin-bottom: 1px;
    border: 1px solid;
    border-color: #a0a0a0 #fff #fff #a0a0a0;
    background-color: #000;
}

.fields {
    display: grid;
    grid-template-columns: 32px 27px 47px 27px;
    grid-auto-rows: 20px;
    gap: 2px 3px;
    align-items: center;
    text-align: right;
}

.fields input {
    width: 27px;
    height: 20px;
    padding: 0 2px;
    border: 1px solid #7a7a7a;
    background-color: #fff;
    font: inherit;
    color: #000;
}

.fields .focus {
    border-color: #0078d7;
}

.add {
    margin-left: 1px;
}
```
